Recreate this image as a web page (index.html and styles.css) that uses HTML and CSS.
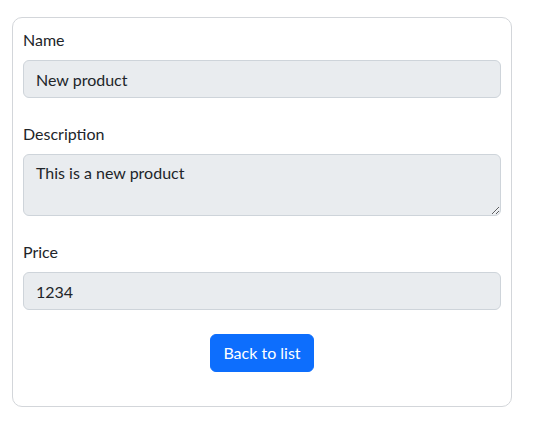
FILE: index.html
```html
<!DOCTYPE html>
<html lang="en">
<head>
<meta charset="utf-8">
<title>Product</title>
<link rel="stylesheet" href="styles.css">
</head>
<body>
<div class="wrap">
  <form class="card">
    <div class="group">
      <label class="label" for="name">Name</label>
      <input class="control" id="name" type="text" value="New product" readonly>
    </div>
    <div class="group">
      <label class="label" for="desc">Description</label>
      <textarea class="control area" id="desc" rows="2" readonly>This is a new product</textarea>
    </div>
    <div class="group">
      <label class="label" for="price">Price</label>
      <input class="control" id="price" type="text" value="1234" readonly>
    </div>
    <div class="group center">
      <a class="btn" href="#">Back to list</a>
    </div>
  </form>
</div>
</body>
</html>
```
FILE: styles.css
```css
* { box-sizing: border-box; }
html, body { margin: 0; background: #fff; }
body {
  font-family: "Segoe UI", Lato, "Noto Sans", "Liberation Sans", sans-serif;
  font-size: 16px;
  line-height: 1.5;
  color: #212529;
}
.wrap { padding: 17px 0 0 12px; }
.card {
  width: 500px;
  border: 1px solid #d3d6da;
  border-radius: 10px;
  padding: 10px 10px 10px;
  display: flex;
  flex-direction: column;
}
.group { margin-bottom: 24px; display: flex; flex-direction: column; }
.label { display: block; margin-bottom: 8px; height: 24px; }
.control {
  display: block;
  width: 100%;
  height: 38px;
  padding: 6px 12px;
  font: inherit;
  line-height: 1.5;
  color: #212529;
  background: #e9ecef;
  border: 1px solid #ced4da;
  border-radius: 6px;
  outline: none;
  margin: 0;
}
.area { height: 62px; resize: vertical; }
.center { align-items: center; }
.btn {
  display: inline-block;
  padding: 6px 12px;
  height: 38px;
  color: #fff;
  background: #0d6efd;
  border: 1px solid #0d6efd;
  border-radius: 6px;
  text-decoration: none;
  line-height: 1.5;
}
```
